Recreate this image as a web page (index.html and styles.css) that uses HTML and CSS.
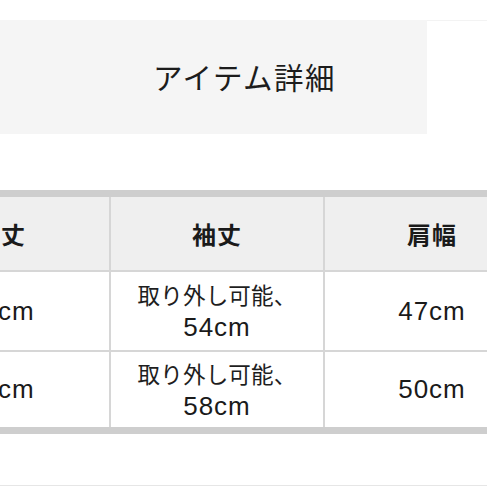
FILE: index.html
```html
<!DOCTYPE html>
<html lang="ja">
<head>
<meta charset="utf-8">
<link rel="stylesheet" href="styles.css">
</head>
<body>
<div class="page">
  <div class="title-row">
    <div class="title-box"><h1 class="title">アイテム詳細</h1></div>
    <div class="title-rest"></div>
  </div>
  <div class="table-wrap">
    <div class="grid">
      <div class="cell head">着丈</div>
      <div class="cell head">袖丈</div>
      <div class="cell head">肩幅</div>

      <div class="cell"><span class="num">70cm</span></div>
      <div class="cell"><span class="jp">取り外し可能、</span><span class="num">54cm</span></div>
      <div class="cell"><span class="num">47cm</span></div>

      <div class="cell"><span class="num">72cm</span></div>
      <div class="cell"><span class="jp">取り外し可能、</span><span class="num">58cm</span></div>
      <div class="cell"><span class="num">50cm</span></div>
    </div>
  </div>
  <div class="foot-line"></div>
</div>
</body>
</html>
```

FILE: styles.css
```css
html, body {
  margin: 0;
  padding: 0;
  background: #ffffff;
  overflow: hidden;
}

.page {
  width: 487px;
  height: 487px;
  overflow: hidden;
  font-family: "Noto Sans CJK JP", "Liberation Sans", sans-serif;
  color: #1e1e1e;
}

.title-row {
  display: flex;
  margin-top: 20px;
  height: 114px;
}

.title-box {
  width: 427px;
  background: #f5f5f5;
  display: flex;
  align-items: center;
  justify-content: center;
  padding-left: 62px;
  box-sizing: border-box;
}

.title-rest {
  flex: 1;
  border-top: 1px solid #f3f3f3;
}

.title {
  margin: 0;
  font-size: 29.5px;
  font-weight: 400;
  letter-spacing: 1.5px;
  line-height: 1;
  color: #1c1c1c;
}

.table-wrap {
  margin-top: 56px;
  margin-left: -107px;
  width: 650px;
}

.grid {
  display: grid;
  grid-template-columns: 216px 212px 214px;
  grid-template-rows: 73px 78px 75px;
  gap: 2px;
  background: #d6d6d6;
  border-top: 7px solid #cecece;
  border-bottom: 7px solid #cecece;
}

.cell {
  background: #ffffff;
  display: flex;
  flex-direction: column;
  align-items: center;
  justify-content: center;
  text-align: center;
  line-height: 33px;
}

.cell.head {
  background: #efefef;
  font-size: 24px;
  font-weight: 700;
  letter-spacing: 1px;
  color: #1a1a1a;
}

.jp {
  font-size: 22.5px;
  letter-spacing: 0.2px;
  color: #1e1e1e;
}

.num {
  font-family: "Liberation Sans", "Noto Sans CJK JP", sans-serif;
  font-size: 26px;
  letter-spacing: 1px;
  color: #1a1a1a;
}

.foot-line {
  margin-top: 51px;
  height: 1px;
  background: #e6e6e6;
}
```
